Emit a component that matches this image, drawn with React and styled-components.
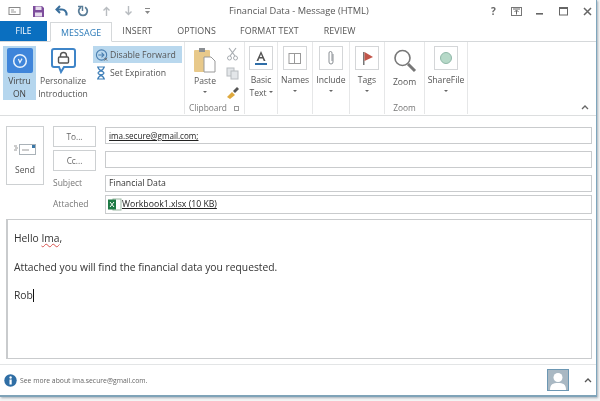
import React from 'react';
import styled, { createGlobalStyle } from 'styled-components';

const GlobalStyle = createGlobalStyle`
html, body {
    margin: 0;
    padding: 0;
    background: #fff;
}
* {
    box-sizing: border-box;
}
`;

const Page = styled.div`
width: 600px;
height: 401px;
overflow: hidden;
padding: 0 3px 4px 0;
background: #f4f5f5;
font-family: "Open Sans", "Noto Sans", sans-serif;
color: #444;
filter: blur(0.3px);
`;

const Window = styled.div`
height: 100%;
display: flex;
flex-direction: column;
background: #fff;
border-right: 1px solid #7fa6bd;
border-bottom: 2px solid #7fa3b8;
box-shadow: 1px 1px 2px rgba(90, 110, 125, 0.5);
`;

const TitleBar = styled.div`
height: 22px;
flex: none;
display: flex;
align-items: center;
padding-left: 8px;
position: relative;
`;

const QuickIcons = styled.div`
display: flex;
align-items: center;
gap: 10px;
`;

const Title = styled.div`
position: absolute;
left: 229px;
top: 3px;
font-size: 9.3px;
line-height: 16px;
color: #555;
white-space: nowrap;
`;

const WindowButtons = styled.div`
margin-left: auto;
display: flex;
align-items: center;
gap: 14px;
padding-right: 4px;
`;

const Help = styled.span`
font-size: 10px;
font-weight: 700;
color: #666;
line-height: 10px;
width: 9px;
margin-right: -3px;
`;

const TabBar = styled.div`
height: 20px;
flex: none;
display: flex;
align-items: flex-end;
border-bottom: 1px solid #d5d8da;
`;

const FileTab = styled.div`
width: 47px;
height: 20px;
background: #0a6fc0;
color: #fff;
font-size: 8.5px;
line-height: 20px;
text-align: center;
`;

const Tab = styled.div`
height: 20px;
margin-left: ${props => props.$ml}px;
padding: 0 ${props => props.$active ? 10 : 0}px;
margin-bottom: ${props => props.$active ? -1 : 0}px;
font-size: 8.9px;
line-height: 19px;
letter-spacing: 0.1px;
color: ${props => props.$active ? '#2b7ab8' : '#555'};
background: #fff;
border: ${props => props.$active ? '1px solid #d5d8da' : 'none'};
border-bottom: ${props => props.$active ? '1px solid #fff' : 'none'};
`;

const Ribbon = styled.div`
height: 74px;
flex: none;
display: flex;
border-bottom: 1px solid #dcdedf;
position: relative;
`;

const Group = styled.div`
width: ${props => props.$w}px;
flex: none;
height: 72px;
display: flex;
flex-direction: column;
border-right: 1px solid #e6e7e8;
`;

const GroupBody = styled.div`
flex: 1;
display: flex;
position: relative;
`;

const GroupLabel = styled.div`
height: 12px;
font-size: 8.4px;
line-height: 12px;
color: #777;
text-align: ${props => props.$left ? 'left' : 'center'};
padding-left: ${props => props.$left ? 4 : 0}px;
position: relative;
`;

const LaunchIcon = styled.span`
position: absolute;
right: 5px;
top: 4px;
width: 5px;
height: 5px;
border: 1px solid #999;
`;

const VirtruButton = styled.div`
width: 33px;
height: 54px;
margin: 4px 0 0 3px;
padding-top: 2px;
background: #b5d6ee;
display: flex;
flex-direction: column;
align-items: center;
font-size: 8.5px;
line-height: 12.5px;
text-align: center;
color: #444;
`;

const VirtruTile = styled.div`
width: 26px;
height: 26px;
margin-bottom: 2px;
border-radius: 2px;
background: #3f85da;
display: flex;
align-items: center;
justify-content: center;
`;

const BigButton = styled.div`
width: ${props => props.$w || 54}px;
padding-top: ${props => props.$pt || 0}px;
display: flex;
flex-direction: column;
align-items: center;
text-align: center;
font-size: 8.6px;
line-height: 12.5px;
color: #555;
`;

const IconFrame = styled.div`
width: 24px;
height: 24px;
margin-bottom: 4px;
border: 1px solid #d4d6d8;
display: flex;
align-items: center;
justify-content: center;
`;

const Caret = styled.span`
display: inline-block;
width: 0;
height: 0;
margin: 0 0 2px 2px;
vertical-align: middle;
border-left: 2px solid transparent;
border-right: 2px solid transparent;
border-top: 2px solid #666;
`;

const CaretLine = styled(Caret)`
display: block;
margin: 3px 0 0;
`;

const ButtonText = styled.span`
margin-top: ${props => props.$mt}px;
`;

const SmallColumn = styled.div`
width: 89px;
margin-left: 3px;
padding-top: 4px;
display: flex;
flex-direction: column;
gap: 1px;
`;

const SmallRow = styled.div`
height: 17px;
display: flex;
align-items: center;
gap: 2px;
padding-left: 2px;
font-size: 8.7px;
white-space: nowrap;
color: #555;
background: ${props => props.$on ? '#b9d8ee' : 'transparent'};
`;

const ToolColumn = styled.div`
display: flex;
flex-direction: column;
gap: 6px;
padding: 5px 0 0 1px;
`;

const Collapse = styled.svg`
position: absolute;
right: 7px;
bottom: 5px;
`;

const Compose = styled.div`
flex: 1;
min-height: 0;
display: flex;
flex-direction: column;
padding: 10px 4px 5px 6px;
border-bottom: 1px solid #e3e5e6;
`;

const Header = styled.div`
display: flex;
flex: none;
`;

const SendButton = styled.div`
width: 38px;
height: 59px;
border: 1px solid #cdd0d2;
display: flex;
flex-direction: column;
align-items: center;
padding-top: 16px;
font-size: 8.5px;
line-height: 12px;
color: #555;
gap: 9px;
`;

const Fields = styled.div`
flex: 1;
margin-left: 9px;
display: grid;
grid-template-columns: 43px 1fr;
column-gap: 9px;
grid-template-rows: 21px 21px 18px 19px;
row-gap: 3px;
`;

const AddressButton = styled.div`
border: 1px solid #cdd0d2;
font-size: 8.3px;
line-height: 19px;
text-align: center;
color: #666;
`;

const FieldLabel = styled.div`
font-size: 8.5px;
line-height: 17px;
color: #777;
`;

const Field = styled.div`
height: ${props => props.$h || 17}px;
margin-top: ${props => props.$mt || 0}px;
border: 1px solid #c9cbcd;
padding: 0 3px 0 ${props => props.$pl || 3}px;
font-size: 8.7px;
line-height: 15px;
color: #333;
display: flex;
align-items: center;
white-space: nowrap;
`;

const LinkText = styled.span`
text-decoration: underline;
color: #222;
font-size: ${props => props.$size}px;
`;

const Body = styled.div`
flex: 1;
margin-top: 5px;
border: 1px solid #c9cbcd;
border-left-width: 2px;
padding: 11px 6px;
font-size: 10.3px;
line-height: 14.5px;
color: #333;
`;

const Para = styled.div`
margin-bottom: 14px;
`;

const Squiggle = styled.span`
text-decoration: underline wavy #d9534f 1px;
text-underline-offset: 1px;
`;

const TextCaret = styled.span`
display: inline-block;
width: 1px;
height: 13px;
vertical-align: -3px;
background: #111;
`;

const Footer = styled.div`
height: 30px;
flex: none;
display: flex;
align-items: center;
padding: 0 4px 0 4px;
font-size: 6.8px;
color: #666;
gap: 3px;
`;

const Avatar = styled.div`
width: 22px;
height: 22px;
margin-left: auto;
margin-right: 12px;
background: #a9b8c3;
border: 1px solid #6c97b3;
`;

const Check = () => (
    <svg width="16" height="16" viewBox="0 0 16 16" fill="none">
        <circle cx="8" cy="8" r="6.3" stroke="#eaf3fc" strokeWidth="1.5" />
        <path d="M6.4 6l1.5 3.6L10 5.6" stroke="#eaf3fc" strokeWidth="1.2" />
    </svg>
);

const App = () => {
    return (
        <Page>
            <GlobalStyle />
            <Window>
                <TitleBar>
                    <QuickIcons>
                        <svg width="14" height="12" viewBox="0 0 14 12" fill="none">
                            <rect x="1" y="2.5" width="11" height="7" fill="#fff" stroke="#888" />
                            <path d="M3 5h3M3 7h5" stroke="#999" />
                        </svg>
                        <svg width="13" height="13" viewBox="0 0 13 13">
                            <path d="M1 1h9l2 2v9H1z" fill="#7d4d9c" />
                            <rect x="3.5" y="1.5" width="6" height="3.5" fill="#e6dcec" />
                            <rect x="3" y="7.5" width="7" height="4" fill="#e6dcec" />
                        </svg>
                        <svg width="13" height="12" viewBox="0 0 13 12" fill="none">
                            <path d="M11.5 10.5c.5-4-2-6-4.5-6H2" stroke="#3a6f9c" strokeWidth="2" />
                            <path d="M5 1L1.5 4.5 5 8" stroke="#3a6f9c" strokeWidth="2" />
                        </svg>
                        <svg width="12" height="12" viewBox="0 0 12 12" fill="none" style={{ marginLeft: -1 }}>
                            <path d="M4 2.3a4.3 4.3 0 1 0 4 0" stroke="#5a7d98" strokeWidth="1.8" />
                            <path d="M1 1.5h4.5V6" stroke="#5a7d98" strokeWidth="1.4" />
                        </svg>
                        <svg width="9" height="10" viewBox="0 0 9 10" fill="none" style={{ marginLeft: 3 }}>
                            <path d="M4.5 10V2M1.5 4.5l3-3 3 3" stroke="#b8bcc0" strokeWidth="1.4" />
                        </svg>
                        <svg width="9" height="10" viewBox="0 0 9 10" fill="none" style={{ marginLeft: 3 }}>
                            <path d="M4.5 0v8M1.5 5.5l3 3 3-3" stroke="#b8bcc0" strokeWidth="1.4" />
                        </svg>
                        <svg width="5" height="7" viewBox="0 0 5 7" fill="#888" style={{ marginLeft: 2 }}>
                            <rect y="0" width="5" height="1" />
                            <path d="M0 3h5L2.5 6z" />
                        </svg>
                    </QuickIcons>
                    <Title>Financial Data - Message (HTML)</Title>
                    <WindowButtons>
                        <Help>?</Help>
                        <svg width="11" height="9" viewBox="0 0 11 9" fill="none">
                            <rect x=".5" y=".5" width="10" height="8" stroke="#777" />
                            <path d="M5.5 7.5v-4M3.5 5l2-2 2 2M2 2h7" stroke="#666" />
                        </svg>
                        <svg width="9" height="9" viewBox="0 0 9 9" fill="#666">
                            <rect y="6" width="7" height="1.6" />
                        </svg>
                        <svg width="10" height="9" viewBox="0 0 10 9" fill="none">
                            <rect x=".5" y=".5" width="8" height="7.5" stroke="#666" />
                            <path d="M0 1.2h9" stroke="#666" strokeWidth="1.6" />
                        </svg>
                        <svg width="9" height="9" viewBox="0 0 9 9" fill="none">
                            <path d="M1 1l7 7M8 1L1 8" stroke="#666" strokeWidth="1.5" />
                        </svg>
                    </WindowButtons>
                </TitleBar>
                <TabBar>
                    <FileTab>FILE</FileTab>
                    <Tab $active $ml={3}>MESSAGE</Tab>
                    <Tab $ml={10}>INSERT</Tab>
                    <Tab $ml={25}>OPTIONS</Tab>
                    <Tab $ml={24}>FORMAT TEXT</Tab>
                    <Tab $ml={25}>REVIEW</Tab>
                </TabBar>
                <Ribbon>
                    <Group $w={185}>
                        <GroupBody>
                            <VirtruButton>
                                <VirtruTile><Check /></VirtruTile>
                                Virtru<br />ON
                            </VirtruButton>
                            <BigButton $w={54} $pt={5}>
                                <svg width="27" height="27" viewBox="0 0 27 27" fill="none">
                                    <path d="M4 2h19a2 2 0 0 1 2 2v14a2 2 0 0 1-2 2h-9l-3 5-2-5H4a2 2 0 0 1-2-2V4a2 2 0 0 1 2-2z" stroke="#3f85c8" strokeWidth="2" fill="#fff" />
                                    <rect x="8.5" y="10" width="10" height="6" rx="1" stroke="#555" strokeWidth="1.4" />
                                    <path d="M10.5 10V8.5a3 3 0 0 1 6 0V10" stroke="#555" strokeWidth="1.4" />
                                </svg>
                                <ButtonText $mt={1}>Personalize<br />Introduction</ButtonText>
                            </BigButton>
                            <SmallColumn>
                                <SmallRow $on>
                                    <svg width="14" height="14" viewBox="0 0 15 14" fill="none" style={{ marginRight: -1 }}>
                                        <circle cx="7" cy="7" r="5.5" stroke="#4a7fb0" strokeWidth="1.2" />
                                        <path d="M3.5 7h6M7 4.5L9.5 7 7 9.5" stroke="#4a7fb0" strokeWidth="1.2" />
                                        <path d="M10 10l3 3M13 10l-3 3" stroke="#666" />
                                    </svg>
                                    Disable Forward
                                </SmallRow>
                                <SmallRow>
                                    <svg width="12" height="14" viewBox="0 0 12 14" fill="none" style={{ marginRight: 1 }}>
                                        <path d="M2 1h8M2 13h8M3 1c0 4 6 4 6 6s-6 2-6 6M9 1c0 4-6 4-6 6s6 2 6 6" stroke="#3f7fb8" strokeWidth="1.2" />
                                    </svg>
                                    Set Expiration
                                </SmallRow>
                            </SmallColumn>
                        </GroupBody>
                    </Group>
                    <Group $w={60}>
                        <GroupBody>
                            <BigButton $w={40} $pt={5}>
                                <svg width="24" height="26" viewBox="0 0 24 26">
                                    <rect x="1" y="3" width="16" height="22" rx="1" fill="#e8c98a" />
                                    <rect x="6" y="1" width="6" height="4" fill="#8b8f93" />
                                    <path d="M11 10h7l4 4v11H11z" fill="#fff" stroke="#999" />
                                </svg>
                                <ButtonText $mt={2}>Paste</ButtonText>
                                <CaretLine />
                            </BigButton>
                            <ToolColumn>
                                <svg width="13" height="14" viewBox="0 0 13 14" fill="none">
                                    <path d="M3 1l6 8M10 1L4 9" stroke="#a8adb2" strokeWidth="1.2" />
                                    <circle cx="3.5" cy="11" r="2" stroke="#a8adb2" />
                                    <circle cx="9.5" cy="11" r="2" stroke="#a8adb2" />
                                </svg>
                                <svg width="13" height="13" viewBox="0 0 13 13" fill="#e3e6e9" stroke="#b8bcc0">
                                    <rect x="1" y="1" width="7" height="8" />
                                    <rect x="5" y="4" width="7" height="8" />
                                </svg>
                                <svg width="14" height="14" viewBox="0 0 14 14">
                                    <path d="M1 11l5-5 3 3-5 4z" fill="#dfa93e" />
                                    <path d="M7 5l4-4 2 2-4 4z" fill="#555" />
                                </svg>
                            </ToolColumn>
                        </GroupBody>
                        <GroupLabel $left>Clipboard<LaunchIcon /></GroupLabel>
                    </Group>
                    <Group $w={33}>
                        <BigButton $w={32} $pt={4}>
                            <IconFrame>
                                <svg width="14" height="16" viewBox="0 0 14 16">
                                    <path d="M7 1L2.5 11h1.8l1-2.4h3.4l1 2.4h1.8zM5.9 7L7 4.2 8.1 7z" fill="#555" />
                                    <rect x="1" y="13" width="12" height="2" fill="#2f6ea8" />
                                </svg>
                            </IconFrame>
                            Basic<br />
                            <span>Text<Caret /></span>
                        </BigButton>
                    </Group>
                    <Group $w={35}>
                        <BigButton $w={34} $pt={4}>
                            <IconFrame>
                                <svg width="14" height="13" viewBox="0 0 14 13" fill="#fff" stroke="#999">
                                    <rect x="1" y="1.5" width="5.5" height="10" />
                                    <rect x="6.5" y="1.5" width="6" height="10" />
                                </svg>
                            </IconFrame>
                            Names
                            <CaretLine />
                        </BigButton>
                    </Group>
                    <Group $w={37}>
                        <BigButton $w={36} $pt={4}>
                            <IconFrame>
                                <svg width="8" height="16" viewBox="0 0 8 16" fill="none">
                                    <path d="M6 4v8a2 2 0 0 1-4 0V3a1.4 1.4 0 0 1 3 0v8" stroke="#8a8f94" />
                                </svg>
                            </IconFrame>
                            Include
                            <CaretLine />
                        </BigButton>
                    </Group>
                    <Group $w={35}>
                        <BigButton $w={34} $pt={4}>
                            <IconFrame>
                                <svg width="13" height="15" viewBox="0 0 13 15">
                                    <rect x="2" y="1" width="1.5" height="13" fill="#777" />
                                    <path d="M3.5 1L12 6l-8.5 4z" fill="#c2564a" />
                                </svg>
                            </IconFrame>
                            Tags
                            <CaretLine />
                        </BigButton>
                    </Group>
                    <Group $w={40}>
                        <GroupBody>
                            <BigButton $w={39} $pt={6}>
                                <svg width="24" height="25" viewBox="0 0 24 25" fill="none">
                                    <circle cx="9.5" cy="10" r="7.5" stroke="#777" strokeWidth="1.6" />
                                    <path d="M15 16l7 7" stroke="#777" strokeWidth="3" />
                                </svg>
                                <ButtonText $mt={3}>Zoom</ButtonText>
                            </BigButton>
                        </GroupBody>
                        <GroupLabel>Zoom</GroupLabel>
                    </Group>
                    <Group $w={43}>
                        <BigButton $w={42} $pt={4}>
                            <IconFrame>
                                <svg width="14" height="14" viewBox="0 0 14 14">
                                    <circle cx="7" cy="7" r="5.5" fill="#b6d9c8" stroke="#8fb8a8" />
                                </svg>
                            </IconFrame>
                            ShareFile
                            <CaretLine />
                        </BigButton>
                    </Group>
                    <Collapse width="8" height="5" viewBox="0 0 8 5" fill="none">
                        <path d="M1 4l3-3 3 3" stroke="#666" strokeWidth="1.3" />
                    </Collapse>
                </Ribbon>
                <Compose>
                    <Header>
                        <SendButton>
                            <svg width="22" height="12" viewBox="0 0 22 12">
                                <rect x="5.5" y="1.5" width="16" height="10" fill="#fff" stroke="#aab2b8" />
                                <rect x="18" y="2" width="3" height="3" fill="#3c78a8" />
                                <path d="M8 7h7M0 3h3M1 5h3M0 7h3" stroke="#999" />
                            </svg>
                            Send
                        </SendButton>
                        <Fields>
                            <AddressButton>To...</AddressButton>
                            <Field $mt={1}><LinkText $size={8.1}>ima.secure@gmail.com;</LinkText></Field>
                            <AddressButton>Cc...</AddressButton>
                            <Field $mt={1} />
                            <FieldLabel>Subject</FieldLabel>
                            <Field $mt={1}>Financial Data</Field>
                            <FieldLabel>Attached</FieldLabel>
                            <Field $h={19} $pl={2}>
                                <svg width="14" height="13" viewBox="0 0 14 13">
                                    <rect x="5" y="1" width="8" height="11" fill="#fff" stroke="#9ab5a2" />
                                    <rect x="0" y="1.5" width="8" height="10" fill="#1e7a45" />
                                    <path d="M2 4l4 5M6 4L2 9" stroke="#fff" />
                                </svg>
                                <LinkText $size={8.7}>Workbook1.xlsx (10 KB)</LinkText>
                            </Field>
                        </Fields>
                    </Header>
                    <Body>
                        <Para>Hello <Squiggle>Ima</Squiggle>,</Para>
                        <Para>Attached you will find the financial data you requested.</Para>
                        <div>Rob<TextCaret /></div>
                    </Body>
                </Compose>
                <Footer>
                    <svg width="13" height="13" viewBox="0 0 13 13">
                        <circle cx="6.5" cy="6.5" r="6.2" fill="#2f6ea5" />
                        <rect x="5.5" y="5.5" width="2.2" height="5" fill="#fff" />
                        <circle cx="6.6" cy="3.5" r="1.2" fill="#fff" />
                    </svg>
                    See more about ima.secure@gmail.com.
                    <Avatar>
                        <svg width="20" height="20" viewBox="0 0 20 20">
                            <circle cx="10" cy="7.5" r="4.5" fill="#fff" />
                            <path d="M2 20c0-6 3-7 8-7s8 1 8 7z" fill="#fff" />
                        </svg>
                    </Avatar>
                    <svg width="8" height="5" viewBox="0 0 8 5" fill="none">
                        <path d="M1 4l3-3 3 3" stroke="#555" strokeWidth="1.3" />
                    </svg>
                </Footer>
            </Window>
        </Page>
    );
};

export default App;
